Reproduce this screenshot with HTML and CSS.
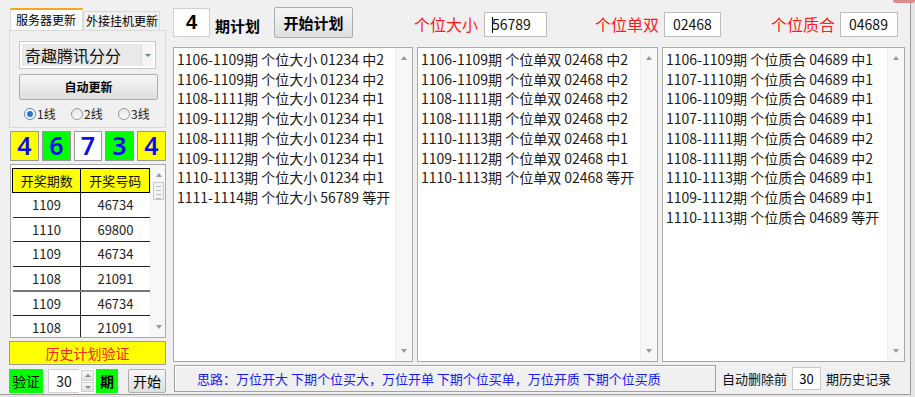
FILE: index.html
```html
<!DOCTYPE html>
<html lang="zh">
<head>
<meta charset="utf-8">
<link rel="stylesheet" href="styles.css">
</head>
<body>
<div class="window">
  <div class="left">
    <div class="tabs">
      <div class="tab active">服务器更新</div>
      <div class="tab">外接挂机更新</div>
    </div>
    <div class="tabpanel">
      <div class="combo"><span class="combo-text">奇趣腾讯分分</span><span class="combo-arrow"></span></div>
      <div class="btn auto">自动更新</div>
      <div class="radios">
        <span class="radio"><span class="dot on"></span>1线</span>
        <span class="radio"><span class="dot"></span>2线</span>
        <span class="radio"><span class="dot"></span>3线</span>
      </div>
    </div>
    <div class="balls">
      <div class="ball yellow">4</div>
      <div class="ball green">6</div>
      <div class="ball white">7</div>
      <div class="ball green">3</div>
      <div class="ball yellow">4</div>
    </div>
    <div class="tablebox">
      <div class="tablewrap">
        <table class="draws">
          <tr class="head"><td>开奖期数</td><td>开奖号码</td></tr>
          <tr><td>1109</td><td>46734</td></tr>
          <tr><td>1110</td><td>69800</td></tr>
          <tr><td>1109</td><td>46734</td></tr>
          <tr class="grey"><td>1108</td><td>21091</td></tr>
          <tr><td>1109</td><td>46734</td></tr>
          <tr class="last"><td>1108</td><td>21091</td></tr>
        </table>
      </div>
      <div class="vscroll small">
        <span class="arr up"></span>
        <span class="thumb"></span>
        <span class="arr down"></span>
      </div>
    </div>
    <div class="history">历史计划验证</div>
    <div class="verify">
      <span class="gtag">验证</span>
      <span class="numin">30</span>
      <span class="spin"><span class="sp up"></span><span class="sp down"></span></span>
      <span class="gtag qi">期</span>
      <span class="btn start">开始</span>
    </div>
  </div>

  <div class="main">
    <div class="toprow">
      <div class="periods">4</div>
      <div class="plan-label">期计划</div>
      <div class="btn plan">开始计划</div>
      <div class="red l1">个位大小</div>
      <div class="field f1"><span class="caret"></span>56789</div>
      <div class="red l2">个位单双</div>
      <div class="field f2">02468</div>
      <div class="red l3">个位质合</div>
      <div class="field f3">04689</div>
    </div>
    <div class="lists">
      <div class="list w1">
        <div class="items">
          <div>1106-1109期 个位大小 01234 中2</div>
          <div>1106-1109期 个位大小 01234 中2</div>
          <div>1108-1111期 个位大小 01234 中1</div>
          <div>1109-1112期 个位大小 01234 中1</div>
          <div>1108-1111期 个位大小 01234 中1</div>
          <div>1109-1112期 个位大小 01234 中1</div>
          <div>1110-1113期 个位大小 01234 中1</div>
          <div>1111-1114期 个位大小 56789 等开</div>
        </div>
        <div class="vscroll"><span class="arr up"></span><span class="arr down"></span></div>
      </div>
      <div class="list w2">
        <div class="items">
          <div>1106-1109期 个位单双 02468 中2</div>
          <div>1106-1109期 个位单双 02468 中2</div>
          <div>1108-1111期 个位单双 02468 中2</div>
          <div>1108-1111期 个位单双 02468 中2</div>
          <div>1110-1113期 个位单双 02468 中1</div>
          <div>1109-1112期 个位单双 02468 中1</div>
          <div>1110-1113期 个位单双 02468 等开</div>
        </div>
        <div class="vscroll"><span class="arr up"></span><span class="arr down"></span></div>
      </div>
      <div class="list w3">
        <div class="items">
          <div>1106-1109期 个位质合 04689 中1</div>
          <div>1107-1110期 个位质合 04689 中1</div>
          <div>1106-1109期 个位质合 04689 中1</div>
          <div>1107-1110期 个位质合 04689 中1</div>
          <div>1108-1111期 个位质合 04689 中2</div>
          <div>1108-1111期 个位质合 04689 中2</div>
          <div>1110-1113期 个位质合 04689 中1</div>
          <div>1109-1112期 个位质合 04689 中1</div>
          <div>1110-1113期 个位质合 04689 等开</div>
        </div>
        <div class="vscroll"><span class="arr up"></span><span class="arr down"></span></div>
      </div>
    </div>
    <div class="bottomrow">
      <div class="idea">思路：万位开大 下期个位买大，万位开单 下期个位买单，万位开质 下期个位买质</div>
      <div class="autodel">自动删除前</div>
      <div class="numbox">30</div>
      <div class="autodel">期历史记录</div>
    </div>
  </div>
</div>
</body>
</html>
```

FILE: styles.css
```css
* { box-sizing: border-box; }
html, body { margin: 0; padding: 0; }
body {
  width: 915px;
  height: 397px;
  background: #e6e6e6;
  font-family: "Noto Sans CJK SC", "Noto Sans", sans-serif;
  color: #000;
  overflow: hidden;
}
.window {
  width: 911px;
  height: 395px;
  background: #f0f0f0;
  border-right: 1px solid #9a9a9a;
  border-bottom: 1px solid #9a9a9a;
  display: flex;
  position: relative;
}
.window::after {
  content: "";
  position: absolute;
  right: -5px;
  top: 0;
  width: 22px;
  height: 3px;
  background: #d98a8a;
  border-radius: 0 0 6px 6px;
}

/* ---------- left column ---------- */
.left {
  width: 166px;
  padding: 8px 0 0 9px;
  display: flex;
  flex-direction: column;
}
.tabs {
  display: flex;
  height: 22px;
  align-items: flex-end;
  padding-left: 1px;
}
.tab {
  font-size: 12px;
  line-height: 18px;
  height: 19px;
  padding: 0 3px;
  border: 1px solid #d9d9d9;
  border-bottom: none;
  background: #f0f0f0;
  color: #000;
  white-space: nowrap;
}
.tab.active {
  height: 22px;
  line-height: 20px;
  width: 73px;
  background: #fff;
  border-top: 2px solid #f5a623;
  padding: 0 5px;
}
.tab:not(.active) { width: 77px; padding: 0 2px; }
.tabpanel {
  width: 157px;
  height: 98px;
  border: 1px solid #d9d9d9;
  padding: 10px 0 0 9px;
}
.combo {
  width: 137px;
  height: 28px;
  border: 1px solid #c8c8c8;
  background: #fff;
  display: flex;
  padding: 2px;
}
.combo-text {
  flex: 1;
  background: #e9e9e9;
  font-size: 16px;
  line-height: 22px;
  padding-left: 3px;
  color: #111;
}
.combo-arrow {
  width: 12px;
  position: relative;
  background: #f4f4f4;
  border-left: 1px solid #ddd;
}
.combo-arrow::after {
  content: "";
  position: absolute;
  left: 3px;
  top: 10px;
  border-left: 3px solid transparent;
  border-right: 3px solid transparent;
  border-top: 3px solid #6d8a6d;
}
.btn {
  border: 1px solid #adadad;
  border-radius: 2px;
  background: linear-gradient(#f6f6f6, #dedede);
  text-align: center;
  color: #000;
}
.auto {
  margin-top: 5px;
  width: 139px;
  height: 26px;
  font-size: 12px;
  font-weight: bold;
  line-height: 24px;
}
.radios {
  display: flex;
  margin-top: 6px;
  padding-left: 5px;
  font-size: 12px;
  line-height: 16px;
  color: #222;
}
.radio { display: flex; align-items: center; width: 47px; }
.dot {
  width: 12px;
  height: 12px;
  border-radius: 50%;
  border: 1px solid #9a9a9a;
  background: linear-gradient(#e6e6e6, #fbfbfb);
  margin-right: 1px;
  position: relative;
}
.dot.on { border-color: #4f87c7; background: #fff; }
.dot.on::after {
  content: "";
  position: absolute;
  left: 2px; top: 2px;
  width: 6px; height: 6px;
  border-radius: 50%;
  background: #2a74d6;
}
.balls {
  display: flex;
  gap: 3px;
  margin-top: 3px;
  padding-left: 1px;
  height: 30px;
}
.ball {
  width: 29px;
  height: 30px;
  border: 1px solid #9a9a9a;
  color: #0c0cf0;
  font-family: "Noto Sans", "Liberation Sans", sans-serif;
  font-weight: 600;
  font-size: 25px;
  line-height: 27px;
  text-align: center;
}
.ball.white { width: 28px; }
.yellow { background: #ffff00; }
.green { background: #00ff00; }
.white { background: #fff; }
.tablebox {
  margin-top: 3px;
  margin-left: 1px;
  width: 156px;
  height: 174px;
  border: 1px solid #a8a8a8;
  background: #fff;
  display: flex;
  overflow: hidden;
}
.tablewrap { width: 139px; padding: 3px 0 0 1px; }
.draws {
  border-collapse: collapse;
  width: 138px;
  font-size: 13px;
  color: #222;
}
.draws td {
  text-align: center;
  height: 24.5px;
  padding: 0;
  border-bottom: 1px solid #222;
  width: 69px;
}
.draws td:first-child { border-right: 1px solid #222; }
.draws .head td {
  background: #ffff00;
  border: 1px solid #000;
  height: 24px;
  color: #111;
}
.draws .grey td { border-bottom-color: #777; border-bottom-width: 2px; }
.draws .last td { border-bottom: none; }
.vscroll {
  width: 17px;
  background: #f7f7f7;
  border-left: 1px solid #eee;
  position: relative;
}
.vscroll .arr {
  position: absolute;
  left: 5px;
  border-left: 3.5px solid transparent;
  border-right: 3.5px solid transparent;
}
.vscroll .arr.up { top: 8px; border-bottom: 4px solid #9a9a9a; }
.vscroll .arr.down { bottom: 8px; border-top: 4px solid #9a9a9a; }
.vscroll.small { width: 16px; }
.vscroll .thumb {
  position: absolute;
  left: 2px;
  top: 17px;
  width: 11px;
  height: 18px;
  border: 1px solid #c9c9c9;
  background: repeating-linear-gradient(#f3f3f3 0 3px, #bbb 3px 4px);
  background-size: 5px 100%;
  background-repeat: repeat-y;
  background-position: center;
  background-color: #f3f3f3;
}
.history {
  margin-top: 3px;
  width: 157px;
  height: 24px;
  background: #ffff00;
  border: 1px solid #9a9a9a;
  color: #ff2020;
  font-size: 14px;
  line-height: 22px;
  text-align: center;
}
.verify {
  margin-top: 4px;
  display: flex;
  align-items: center;
  height: 24px;
  font-size: 14px;
}
.gtag {
  background: #00ff00;
  height: 24px;
  line-height: 24px;
  width: 34px;
  text-align: center;
}
.qi { width: 22px; font-weight: bold; }
.numin {
  margin-left: 5px;
  width: 31px;
  height: 24px;
  background: #fff;
  border: 1px solid #d0d0d0;
  border-right: none;
  text-align: center;
  line-height: 22px;
  color: #111;
}
.spin {
  width: 17px;
  height: 24px;
  display: flex;
  flex-direction: column;
  background: #fff;
  padding: 1px 2px;
  gap: 1px;
}
.sp {
  flex: 1;
  background: linear-gradient(#f5f5f5, #e2e2e2);
  border: 1px solid #d0d0d0;
  position: relative;
}
.sp::after {
  content: "";
  position: absolute;
  left: 3px; top: 3px;
  border-left: 3px solid transparent;
  border-right: 3px solid transparent;
}
.sp.up::after { border-bottom: 3px solid #888; }
.sp.down::after { border-top: 3px solid #888; }
.start {
  margin-left: 10px;
  width: 38px;
  height: 24px;
  line-height: 22px;
  font-size: 14px;
}

/* ---------- main column ---------- */
.main {
  width: 740px;
  padding: 7px 0 0 7px;
  display: flex;
  flex-direction: column;
}
.toprow {
  display: flex;
  align-items: center;
  height: 31px;
}
.periods {
  width: 37px;
  height: 29px;
  background: #fff;
  border: 1px solid #cfcfcf;
  font-family: "Liberation Sans", sans-serif;
  font-weight: bold;
  font-size: 20px;
  line-height: 27px;
  text-align: center;
}
.plan-label {
  margin-left: 5px;
  font-size: 15px;
  font-weight: bold;
  padding-top: 6px;
  width: 48px;
}
.plan {
  margin-left: 11px;
  width: 79px;
  height: 31px;
  line-height: 29px;
  font-size: 15px;
  font-weight: bold;
}
.red {
  color: #ff1a1a;
  font-size: 16px;
  line-height: 20px;
  padding-top: 3px;
}
.l1 { margin-left: 61px; }
.l2 { margin-left: 48px; }
.l3 { margin-left: 50px; }
.field {
  margin-left: 5px;
  height: 25px;
  background: #fff;
  border: 1px solid #bdbdbd;
  font-size: 14px;
  line-height: 23px;
  padding-left: 8px;
  color: #111;
  margin-top: 4px;
  position: relative;
}
.f1 { width: 63px; padding-left: 7px; margin-left: 6px; }
.f2 { width: 57px; }
.f3 { width: 58px; }
.caret {
  position: absolute;
  left: 7px;
  top: 4px;
  width: 1px;
  height: 16px;
  background: #000;
}
.lists {
  margin-top: 9px;
  display: flex;
  gap: 4px;
  height: 315px;
}
.list {
  height: 315px;
  background: #fff;
  border: 1px solid #a9a9a9;
  display: flex;
}
.w1 { width: 240px; }
.w2 { width: 241px; }
.w3 { width: 243px; }
.items {
  flex: 1;
  padding: 2px 0 0 3px;
  font-size: 14px;
  line-height: 19.7px;
  color: #1a1a1a;
  white-space: nowrap;
  overflow: hidden;
}
.bottomrow {
  margin-top: 3px;
  display: flex;
  align-items: center;
  height: 27px;
}
.idea {
  margin-left: 1px;
  width: 542px;
  height: 27px;
  border: 1px solid #a0a0a0;
  background: #f0f0f0;
  box-shadow: inset 1px 1px 0 #fff;
  color: #1a1aff;
  font-size: 13px;
  line-height: 25px;
  padding-left: 22px;
}
.autodel {
  font-size: 13px;
  color: #111;
  margin-left: 6px;
}
.numbox {
  margin-left: 5px;
  width: 29px;
  height: 23px;
  background: #fff;
  border: 1px solid #c8c8c8;
  font-size: 13px;
  line-height: 21px;
  text-align: center;
}
.numbox + .autodel { margin-left: 5px; }
```
